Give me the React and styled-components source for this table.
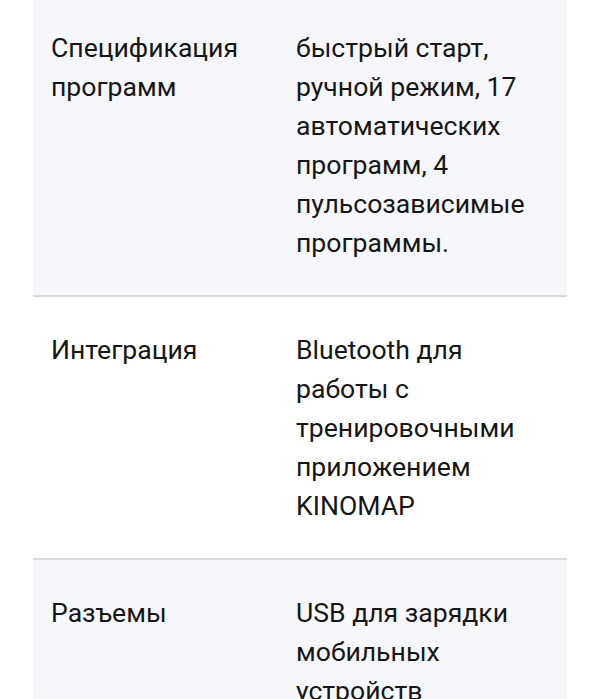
import React from "react";
import styled, { createGlobalStyle } from "styled-components";

const GlobalStyle = createGlobalStyle`
  html, body {
    margin: 0;
    padding: 0;
    background: #ffffff;
  }
  body {
    font-family: Roboto, "Noto Sans", sans-serif;
  }
`;

const Page = styled.div`
  padding: 0 34px 0 33px;
  margin-top: -5px;
`;

const Table = styled.div`
  display: flex;
  flex-direction: column;
`;

const Row = styled.div`
  display: grid;
  grid-template-columns: 245px 1fr;
  padding: 33px 16px 33px 18px;
  background: ${(props) => (props.shaded ? "#f6f7fc" : "#ffffff")};
  border-top: ${(props) => (props.first ? "none" : "2px solid #d9d9dc")};
`;

const Cell = styled.div`
  font-size: 26.6px;
  line-height: 39px;
  color: #161616;
`;

const rows = [
  {
    label: "Спецификация программ",
    value:
      "быстрый старт, ручной режим, 17 автоматических программ, 4 пульсозависимые программы.",
  },
  {
    label: "Интеграция",
    value: "Bluetooth для работы с тренировочными приложением KINOMAP",
  },
  {
    label: "Разъемы",
    value: "USB для зарядки мобильных устройств",
  },
];

export default function App() {
  return (
    <Page>
      <GlobalStyle />
      <Table>
        {rows.map((row, i) => (
          <Row key={row.label} shaded={i % 2 === 0} first={i === 0}>
            <Cell>{row.label}</Cell>
            <Cell>{row.value}</Cell>
          </Row>
        ))}
      </Table>
    </Page>
  );
}
